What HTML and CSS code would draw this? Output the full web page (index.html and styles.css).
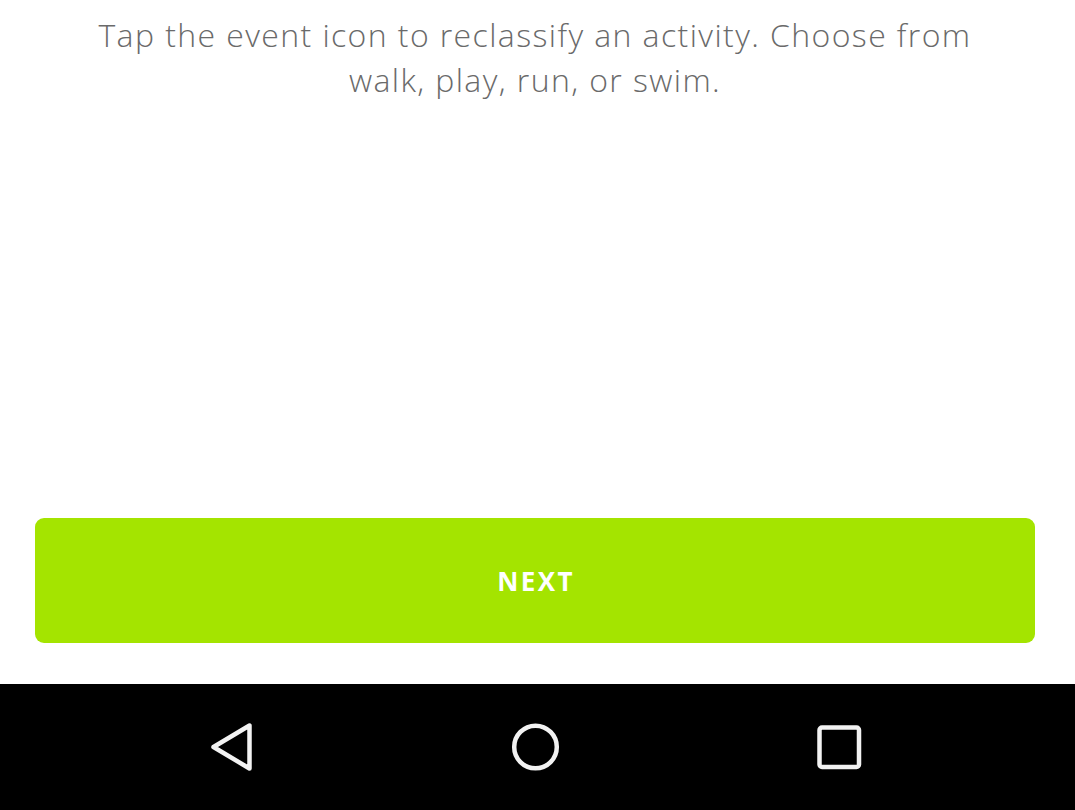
FILE: index.html
```html
<!DOCTYPE html>
<html>
<head>
<meta charset="utf-8">
<link rel="stylesheet" href="styles.css">
</head>
<body>
<div class="screen">
  <main class="content">
    <p class="hint">Tap the event icon to reclassify an activity. Choose from<br>walk, play, run, or swim.</p>
    <button class="next">NEXT</button>
  </main>
  <nav class="navbar">
    <div class="slot">
      <svg width="60" height="60" viewBox="0 0 60 60"><path d="M47.5 8.5 L47.5 51.5 L11.5 30 Z" fill="none" stroke="#f2f2f2" stroke-width="4.5" stroke-linejoin="round"/></svg>
    </div>
    <div class="slot">
      <svg width="60" height="60" viewBox="0 0 60 60"><circle cx="30.5" cy="30" r="21.3" fill="none" stroke="#f2f2f2" stroke-width="4.5"/></svg>
    </div>
    <div class="slot">
      <svg width="60" height="60" viewBox="0 0 60 60"><rect x="11.5" y="10.5" width="39.5" height="39.5" rx="2.5" fill="none" stroke="#f2f2f2" stroke-width="4.5"/></svg>
    </div>
  </nav>
</div>
</body>
</html>
```

FILE: styles.css
```css
html, body {
  margin: 0;
  padding: 0;
  background: #ffffff;
}
.screen {
  width: 1075px;
  height: 810px;
  display: flex;
  flex-direction: column;
}
.content {
  height: 684px;
  display: flex;
  flex-direction: column;
  align-items: center;
  box-sizing: border-box;
  padding: 12px 40px 41px 35px;
}
.hint {
  margin: 0;
  font-family: "Open Sans", "Liberation Sans", sans-serif;
  font-weight: 300;
  font-size: 32px;
  line-height: 45px;
  color: #6a6a6a;
  text-align: center;
  letter-spacing: 1.4px;
  white-space: nowrap;
}
.next {
  margin-top: auto;
  width: 1000px;
  height: 125px;
  border: none;
  border-radius: 9px;
  background: #a4e400;
  color: #ffffff;
  font-family: "Open Sans", "Liberation Sans", sans-serif;
  font-weight: 700;
  font-size: 26px;
  letter-spacing: 2.4px;
  padding: 0 0 0 2px;
}
.navbar {
  height: 126px;
  background: #000000;
  display: flex;
  justify-content: center;
  align-items: center;
  gap: 203px;
  padding-right: 5px;
}
.slot {
  width: 100px;
  display: flex;
  justify-content: center;
  align-items: center;
}
.slot svg {
  display: block;
}
```
